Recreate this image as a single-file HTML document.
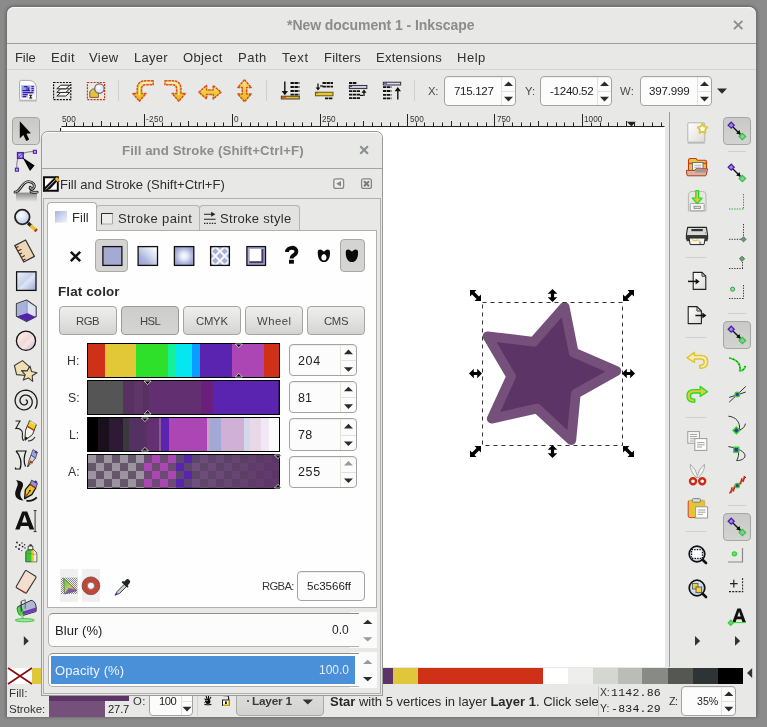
<!DOCTYPE html>
<html><head><meta charset="utf-8">
<style>
*{box-sizing:border-box;margin:0;padding:0}
html,body{width:767px;height:727px;overflow:hidden}
body{background:#8b8b8b;font-family:"Liberation Sans",sans-serif;font-size:13px;color:#2e2e2e;position:relative}
.a{position:absolute}
.t{position:absolute;white-space:nowrap;line-height:1;will-change:transform}
.t b{font-weight:bold}
.m{font-family:"Liberation Mono",monospace}
.hl{position:absolute;height:1px}
.vl{position:absolute;width:1px}
.fld{position:absolute;background:#fcfcfc;border:1px solid #a3a3a0;border-radius:4px;box-shadow:inset 0 1px 1px rgba(0,0,0,.06)}
.btn{position:absolute;border:1px solid #a4a4a1;border-radius:4px;background:linear-gradient(#eeeeed,#e2e2e0 50%,#d3d3d1)}
.btn.on{background:linear-gradient(#cdcdcb,#d4d4d2);border-color:#9a9a97}
svg{position:absolute;overflow:visible;left:0;top:0}

</style></head><body>
<!-- win -->
<div class="a" style="left:6px;top:6px;width:751px;height:711px;background:#747474;border-radius:8px 8px 0 0;box-shadow:0 0 3px 0 rgba(70,70,70,.7)"></div>
<div class="a" style="left:7px;top:7px;width:749.4px;height:709.6px;background:#e8e8e7;border-radius:7px 7px 0 0;box-shadow:inset 0 1px 0 #fbfbfb"></div>
<div class="t" id="t0" style="top:18px;font-size:14px;color:#8c8c8c;left:286.96px;font-weight:bold;letter-spacing:-0.062px;">*New document 1 - Inkscape</div>
<svg width="767" height="727"><path d="M734 20.8l8.4 8.4M742.4 20.8l-8.4 8.4" stroke="#8a8e8e" stroke-width="1.9" fill="none"/></svg>
<div class="hl" style="left:7px;top:43px;width:749.4px;background:#9d9d9b"></div>
<div class="hl" style="left:7px;top:69px;width:749.4px;background:#d4d4d2"></div>

<!-- menu -->
<div class="t" id="t1" style="top:51px;font-size:13px;color:#303030;left:14.72px;letter-spacing:-0.084px;">File</div><div class="t" id="t2" style="top:51px;font-size:13px;color:#303030;left:50.72px;letter-spacing:0.387px;">Edit</div><div class="t" id="t3" style="top:51px;font-size:13px;color:#303030;left:89.42px;letter-spacing:0.402px;">View</div><div class="t" id="t4" style="top:51px;font-size:13px;color:#303030;left:133.62px;letter-spacing:0.273px;">Layer</div><div class="t" id="t5" style="top:51px;font-size:13px;color:#303030;left:182.72px;letter-spacing:0.379px;">Object</div><div class="t" id="t6" style="top:51px;font-size:13px;color:#303030;left:237.72px;letter-spacing:0.517px;">Path</div><div class="t" id="t7" style="top:51px;font-size:13px;color:#303030;left:282.02px;letter-spacing:0.776px;">Text</div><div class="t" id="t8" style="top:51px;font-size:13px;color:#303030;left:323.62px;letter-spacing:0.211px;">Filters</div><div class="t" id="t9" style="top:51px;font-size:13px;color:#303030;left:375.62px;letter-spacing:0.228px;">Extensions</div><div class="t" id="t10" style="top:51px;font-size:13px;color:#303030;left:456.92px;letter-spacing:0.517px;">Help</div>
<!-- toolbar -->
<div class="vl" style="left:118px;top:80px;height:21px;background:#cfcfcd"></div><div class="vl" style="left:266px;top:80px;height:21px;background:#cfcfcd"></div><div class="vl" style="left:414px;top:80px;height:21px;background:#cfcfcd"></div><div class="t" id="t11" style="top:86px;font-size:11.3px;color:#4a4a4a;left:428.322px;letter-spacing:-0.221px;">X:</div><div class="fld" style="left:444px;top:76px;width:72px;height:30px"></div><div class="vl" style="left:501px;top:77px;height:28px;background:#e4e2d8"></div><div class="hl" style="left:502px;top:91px;width:13px;background:#e4e2d8"></div><div class="t" id="t12" style="top:85px;font-size:11.6px;color:#222;left:453.804px;letter-spacing:-0.328px;">715.127</div><svg width="767" height="727"><path d="M504 86l4.5 -4.6l4.5 4.6z" fill="#2b2b2b"/><path d="M504 96.8l4.5 4.6l4.5 -4.6z" fill="#2b2b2b"/></svg><div class="t" id="t13" style="top:86px;font-size:11.3px;color:#4a4a4a;left:524.722px;letter-spacing:0.196px;">Y:</div><div class="fld" style="left:540px;top:76px;width:72px;height:30px"></div><div class="vl" style="left:597px;top:77px;height:28px;background:#e4e2d8"></div><div class="hl" style="left:598px;top:91px;width:13px;background:#e4e2d8"></div><div class="t" id="t14" style="top:85px;font-size:11.6px;color:#222;left:549.804px;letter-spacing:-0.292px;">-1240.52</div><svg width="767" height="727"><path d="M600 86l4.5 -4.6l4.5 4.6z" fill="#2b2b2b"/><path d="M600 96.8l4.5 4.6l4.5 -4.6z" fill="#2b2b2b"/></svg><div class="t" id="t15" style="top:86px;font-size:11.3px;color:#4a4a4a;left:620.122px;letter-spacing:0.298px;">W:</div><div class="fld" style="left:640px;top:76px;width:72px;height:30px"></div><div class="vl" style="left:697px;top:77px;height:28px;background:#e4e2d8"></div><div class="hl" style="left:698px;top:91px;width:13px;background:#e4e2d8"></div><div class="t" id="t16" style="top:85px;font-size:11.6px;color:#222;left:649.104px;letter-spacing:-0.205px;">397.999</div><svg width="767" height="727"><path d="M700 86l4.5 -4.6l4.5 4.6z" fill="#2b2b2b"/><path d="M700 96.8l4.5 4.6l4.5 -4.6z" fill="#2b2b2b"/></svg><svg width="767" height="727"><path d="M717 88.5h10l-5 5.2z" fill="#2b2b2b"/></svg><svg id="tbicons" width="767" height="727"><defs><linearGradient id="gArr" x1="0" y1="0" x2="0" y2="1"><stop offset="0" stop-color="#f4e89a"/><stop offset=".45" stop-color="#ecd040"/><stop offset="1" stop-color="#e2ba18"/></linearGradient></defs><path d="M19.600 82q0-1.600 1.600-1.600h8.600q6.400 1 6.600 7.600v10.800q0 1.400-1.400 1.400h-14q-1.400 0-1.400-1.400z" fill="#fefefe" stroke="#aaaaa8" stroke-width="1"/><path d="M19 101h18" stroke="#b4b4b2" stroke-width="1"/><rect x="21" y="85" width="13.600" height="12.800" fill="#b8cde8"/><rect x="22" y="86" width="8" height="5.200" fill="#7aa8e0"/><path d="M22.400 90.600h7.600M24 86.600h3.400M27 87v3M28.600 87.400v2.600M31.400 86.600h2.400M31.400 88.600h2.400M31.400 90.600h2.400M22.600 92.600h10.600M22.600 94.600h5M22.600 96.600h3.600" stroke="#4a12b0" stroke-width="1.100"/><rect x="28" y="94.200" width="6.600" height="4.600" fill="#fefefe"/><path d="M29.200 95.200h3M29.200 98h3M30.700 95.200v2.800" stroke="#111" stroke-width="1.100"/><rect x="53.600" y="82.500" width="17.200" height="17.200" fill="none" stroke="#111" stroke-width="1.200" stroke-dasharray="2 1.100"/><path d="M56.800 96L60.800 92.4H69.800L65.800 96Z" fill="#fdfdfd" stroke="#222" stroke-width="1" stroke-linejoin="round"/><path d="M56.800 92.4L60.800 88.8H69.800L65.800 92.4Z" fill="#fdfdfd" stroke="#222" stroke-width="1" stroke-linejoin="round"/><path d="M56.800 88.8L60.800 85.2H69.800L65.800 88.8Z" fill="#fdfdfd" stroke="#222" stroke-width="1" stroke-linejoin="round"/><rect x="87.400" y="82.500" width="17.200" height="17.200" fill="none" stroke="#d42a12" stroke-width="1.200" stroke-dasharray="2 1.100"/><path d="M89.800 97.400v-6l2.800-2.400h5.800v8.400z" fill="#e2c43a" stroke="#6a5a2a" stroke-width=".9"/><circle cx="99.400" cy="88.600" r="4.700" fill="#e4eaf8" stroke="#6a6a72" stroke-width="1.200"/><circle cx="98.400" cy="87.400" r="2" fill="#fff"/><g><path d="M153.200 80.800H146Q137.200 80.800 137.200 89V93.400H132.800L139.400 101.200L146 93.400H141.600V89Q141.600 84.800 146 84.800H153.200Z" fill="url(#gArr)" stroke="#d8501e" stroke-width="1.500" stroke-linejoin="round" stroke-dasharray="2.600 .7"/><path d="M152 82.800H146Q139.400 82.800 139.400 89V95" stroke="#fbf4d0" stroke-width="1" fill="none"/></g><g transform="translate(318.2 0) scale(-1 1)"><path d="M153.200 80.800H146Q137.200 80.800 137.200 89V93.400H132.800L139.400 101.200L146 93.400H141.600V89Q141.600 84.800 146 84.800H153.200Z" fill="url(#gArr)" stroke="#d8501e" stroke-width="1.500" stroke-linejoin="round" stroke-dasharray="2.600 .7"/><path d="M152 82.800H146Q139.400 82.800 139.400 89V95" stroke="#fbf4d0" stroke-width="1" fill="none"/></g><path d="M198.800 92.200L206.600 85.400V90H213.200V85.400L221 92.200L213.200 99V94.400H206.600V99Z" fill="url(#gArr)" stroke="#d8501e" stroke-width="1.500" stroke-linejoin="round" stroke-dasharray="2.600 .7"/><path d="M244.500 79.800L251.200 87.600H246.700V94H251.200L244.500 101.800L237.800 94H242.300V87.600H237.800Z" fill="url(#gArr)" stroke="#d8501e" stroke-width="1.500" stroke-linejoin="round" stroke-dasharray="2.600 .7"/><path d="M290.5 83H299.4" stroke="#111" stroke-width="1.8" stroke-dasharray="3.400 .6"/><path d="M290.5 87H299.4" stroke="#111" stroke-width="1.8" stroke-dasharray="3.400 .6"/><path d="M290.5 91H299.4" stroke="#111" stroke-width="1.8" stroke-dasharray="3.400 .6"/><path d="M290.5 94.6H299.4" stroke="#111" stroke-width="1.8" stroke-dasharray="3.400 .6"/><path d="M284.800 81.600v11" stroke="#111" stroke-width="1.400"/><path d="M281.600 91l3.200 4.200l3.200-4.200z" fill="#111"/><rect x="281.300" y="96.200" width="18" height="2.800" fill="#e8b820" stroke="#333" stroke-width=".9"/><path d="M282 97.200h4" stroke="#d42a12" stroke-width="1"/><path d="M322.5 83H333" stroke="#111" stroke-width="1.8" stroke-dasharray="3.400 .6"/><path d="M322.5 86.6H333" stroke="#111" stroke-width="1.8" stroke-dasharray="3.400 .6"/><path d="M325 98.4H333" stroke="#111" stroke-width="1.8" stroke-dasharray="3.400 .6"/><path d="M318 83.400v5" stroke="#111" stroke-width="1.300"/><path d="M315.600 87.400l2.400 3.200l2.400-3.200z" fill="#111"/><path d="M320 86h3" stroke="#111" stroke-width="1.200"/><rect x="315.400" y="92.200" width="17.600" height="3.600" fill="#e8c830" stroke="#5a4a10" stroke-width=".9"/><path d="M316 92.800h2" stroke="#d42a12" stroke-width="1"/><path d="M349 83H356.4" stroke="#111" stroke-width="1.8" stroke-dasharray="3.400 .6"/><path d="M349 91.2H360" stroke="#111" stroke-width="1.8" stroke-dasharray="3.400 .6"/><path d="M349 94.6H360" stroke="#111" stroke-width="1.8" stroke-dasharray="3.400 .6"/><path d="M349 98.2H360" stroke="#111" stroke-width="1.8" stroke-dasharray="3.400 .6"/><rect x="349.300" y="85.400" width="17.600" height="3.200" fill="#c8cce8" stroke="#222" stroke-width=".9"/><path d="M350 86.400h2" stroke="#5a24b0" stroke-width="1"/><path d="M364 92v4" stroke="#111" stroke-width="1.300"/><path d="M361.400 92.800l2.600-3.400l2.600 3.400z" fill="#111"/><path d="M360 95.400h3" stroke="#111" stroke-width="1.200"/><path d="M383 87.2H391.4" stroke="#111" stroke-width="1.8" stroke-dasharray="3.400 .6"/><path d="M383 91H391.4" stroke="#111" stroke-width="1.8" stroke-dasharray="3.400 .6"/><path d="M383 94.8H391.4" stroke="#111" stroke-width="1.8" stroke-dasharray="3.400 .6"/><path d="M383 98.4H391.4" stroke="#111" stroke-width="1.8" stroke-dasharray="3.400 .6"/><rect x="383.300" y="82.200" width="17.400" height="2.800" fill="#d4d8f0" stroke="#222" stroke-width=".9"/><path d="M384 83.200h3" stroke="#5a24b0" stroke-width="1"/><path d="M397.800 90v9.400" stroke="#111" stroke-width="1.400"/><path d="M394.600 91.200l3.200-4.200l3.200 4.200z" fill="#111"/></svg>
<!-- ruler -->
<svg width="767" height="727"><path d="M61.500 126.500H664.500M60.500 128V132" stroke="#222" stroke-width="1" fill="none"/><path d="M66.5 122.5V127M74.5 122.5V127M83.5 122.5V127M92.5 122.5V127M101.5 121V127M110.5 122.5V127M118.5 122.5V127M127.5 122.5V127M136.5 122.5V127M144.5 114V127M153.5 122.5V127M162.5 122.5V127M171.5 122.5V127M180.5 122.5V127M188.5 121V127M197.5 122.5V127M206.5 122.5V127M214.5 122.5V127M223.5 122.5V127M232.5 114V127M241.5 122.5V127M250.5 122.5V127M258.5 122.5V127M267.5 122.5V127M276.5 121V127M284.5 122.5V127M293.5 122.5V127M302.5 122.5V127M311.5 122.5V127M320.5 114V127M328.5 122.5V127M337.5 122.5V127M346.5 122.5V127M354.5 122.5V127M363.5 121V127M372.5 122.5V127M381.5 122.5V127M390.5 122.5V127M398.5 122.5V127M407.5 114V127M416.5 122.5V127M424.5 122.5V127M433.5 122.5V127M442.5 122.5V127M451.5 121V127M460.5 122.5V127M468.5 122.5V127M477.5 122.5V127M486.5 122.5V127M494.5 114V127M503.5 122.5V127M512.5 122.5V127M521.5 122.5V127M530.5 122.5V127M538.5 121V127M547.5 122.5V127M556.5 122.5V127M564.5 122.5V127M573.5 122.5V127M582.5 114V127M591.5 122.5V127M600.5 122.5V127M608.5 122.5V127M617.5 122.5V127M626.5 121V127M634.5 122.5V127M643.5 122.5V127M652.5 122.5V127M661.5 122.5V127" stroke="#222" stroke-width="1" fill="none"/><path d="M627 121.800h8.800l-4.400 4.600z" fill="#222"/></svg><div class="t" id="t17" style="top:116px;font-size:8.2px;color:#333;left:61.908px;letter-spacing:0.045px;">500</div><div class="t" id="t18" style="top:116px;font-size:8.2px;color:#333;left:145.608px;letter-spacing:0.341px;">-250</div><div class="t" id="t19" style="top:116px;font-size:8.2px;color:#333;left:234.008px;">0</div><div class="t" id="t20" style="top:116px;font-size:8.2px;color:#333;left:321.708px;letter-spacing:0.005px;">250</div><div class="t" id="t21" style="top:116px;font-size:8.2px;color:#333;left:409.508px;letter-spacing:0.045px;">500</div><div class="t" id="t22" style="top:116px;font-size:8.2px;color:#333;left:497.008px;letter-spacing:0.005px;">750</div><div class="t" id="t23" style="top:116px;font-size:8.2px;color:#333;left:584.108px;letter-spacing:0.047px;">1000</div>
<!-- canvas -->
<div class="a" style="left:61.500px;top:127px;width:603.500px;height:540.300px;background:#fff"></div><div class="vl" style="left:669px;top:112px;height:554.500px;background:#9c9c9a"></div><svg width="767" height="727"><polygon points="616.4,371.0 575.8,393.8 571.3,440.2 537.1,408.6 491.7,418.7 511.1,376.4 487.5,336.3 533.7,341.7 564.6,306.8 573.7,352.5" fill="#5c3566" stroke="#75507b" stroke-width="9.7" stroke-linejoin="round"/><rect x="482.5" y="302.5" width="140" height="143" fill="none" stroke="#333" stroke-width="1" stroke-dasharray="4 4"/><g transform="translate(475.5 295.5) scale(1 1)"><path d="M-5.5 -5.5L1 -5.5L-1.05 -3.45L3.45 1.05L5.5 -1L5.5 5.5L-1 5.5L1.05 3.45L-3.45 -1.05L-5.5 1Z" fill="#000"/></g><g transform="translate(552.5 295.5) rotate(90)"><path d="M-6.5 0l4.8 -4.8v3.2h3.4v-3.2l4.8 4.8l-4.8 4.8v-3.2h-3.4v3.2z" fill="#000"/></g><g transform="translate(628.5 295.5) scale(-1 1)"><path d="M-5.5 -5.5L1 -5.5L-1.05 -3.45L3.45 1.05L5.5 -1L5.5 5.5L-1 5.5L1.05 3.45L-3.45 -1.05L-5.5 1Z" fill="#000"/></g><g transform="translate(475.5 373.5) rotate(0)"><path d="M-6.5 0l4.8 -4.8v3.2h3.4v-3.2l4.8 4.8l-4.8 4.8v-3.2h-3.4v3.2z" fill="#000"/></g><g transform="translate(628.5 373.5) rotate(0)"><path d="M-6.5 0l4.8 -4.8v3.2h3.4v-3.2l4.8 4.8l-4.8 4.8v-3.2h-3.4v3.2z" fill="#000"/></g><g transform="translate(475.5 451.5) scale(-1 1)"><path d="M-5.5 -5.5L1 -5.5L-1.05 -3.45L3.45 1.05L5.5 -1L5.5 5.5L-1 5.5L1.05 3.45L-3.45 -1.05L-5.5 1Z" fill="#000"/></g><g transform="translate(552.5 451.5) rotate(90)"><path d="M-6.5 0l4.8 -4.8v3.2h3.4v-3.2l4.8 4.8l-4.8 4.8v-3.2h-3.4v3.2z" fill="#000"/></g><g transform="translate(628.5 451.5) scale(1 1)"><path d="M-5.5 -5.5L1 -5.5L-1.05 -3.45L3.45 1.05L5.5 -1L5.5 5.5L-1 5.5L1.05 3.45L-3.45 -1.05L-5.5 1Z" fill="#000"/></g></svg>
<!-- lefttools -->
<div class="btn on" style="left:12.200px;top:117px;width:27.600px;height:27.600px;background:linear-gradient(#c9c9c7,#d5d5d3);border-color:#a6a6a3"></div><svg width="767" height="727"><defs><linearGradient id="gRect" x1="0" y1="0" x2="1" y2="1"><stop offset="0" stop-color="#eef1fa"/><stop offset=".45" stop-color="#c9d3ea"/><stop offset=".55" stop-color="#dfe5f3"/><stop offset="1" stop-color="#9aa6d6"/></linearGradient><linearGradient id="gEll" x1="0" y1="0" x2="1" y2="1"><stop offset="0" stop-color="#fdf3f0"/><stop offset=".5" stop-color="#f0d8d8"/><stop offset=".6" stop-color="#f6e6e6"/><stop offset="1" stop-color="#c8a8d4"/></linearGradient><linearGradient id="gWave" x1="0" y1="0" x2="0" y2="1"><stop offset="0" stop-color="#8a8a8a"/><stop offset="1" stop-color="#e4e4e4"/></linearGradient><radialGradient id="gLens" cx=".4" cy=".35" r=".7"><stop offset="0" stop-color="#ffffff"/><stop offset="1" stop-color="#b8c8e8"/></radialGradient></defs><path d="M19.800 121.200V138.200L23.400 134.900L26.300 140.900L29.200 139.500L26.400 133.700L30.900 133.300Z" fill="#000"/><path d="M16.800 168C16.600 164 17 161.500 17.800 159M23.800 153.200C27 152 30 151.600 33.400 151.600" stroke="#777" stroke-width="1" fill="none"/><rect x="17.600" y="152.700" width="5.600" height="5.600" fill="#a8a4e4" stroke="#5020b0" stroke-width="1.500"/><path d="M18.500 157.400l3.800-3.800" stroke="#5020b0" stroke-width=".8"/><rect x="33.400" y="150.300" width="3" height="3" fill="#c0b0f0" stroke="#5020b0" stroke-width="1.100"/><rect x="15.400" y="168.200" width="3" height="3" fill="#c0b0f0" stroke="#5020b0" stroke-width="1.100"/><path d="M22.600 157.400L34.600 165.400L30 171Z" fill="#000"/><path d="M16 192.600h21v8.800h-21z" fill="url(#gWave)"/><path d="M15 192.200C20.500 192.200 21.500 181.800 28.400 181.600C33 181.500 35.600 185.200 33.600 188.200C32.200 190 29.800 189.200 30.200 187.200M31 191.800C33 192.400 35 192.400 37.200 192.200" stroke="#222" stroke-width="2.800" fill="none" stroke-linecap="round"/><path d="M15 192.200C20.500 192.200 21.500 181.800 28.400 181.600C33 181.500 35.600 185.200 33.600 188.200C32.200 190 29.800 189.200 30.200 187.200M31 191.800C33 192.400 35 192.400 37.200 192.200" stroke="#f4f4f4" stroke-width=".9" fill="none" stroke-linecap="round"/><circle cx="22.3" cy="217" r="7.3" fill="url(#gLens)" stroke="#222" stroke-width="1.8"/><path d="M28 223l3.5 3.2" stroke="#222" stroke-width="3.2"/><path d="M30.6 225.6l5.4 4.8" stroke="#e6c42a" stroke-width="3.4"/><path d="M35.2 229.6l1.4 1.3" stroke="#d42a12" stroke-width="3.4"/><path d="M14.8 245.6L25.6 240L34.4 256.4L23.8 262Z" fill="#ecd8b6" stroke="#333" stroke-width="1.2" stroke-linejoin="round"/><path d="M16 247.8l2.6 -1.3M17.8 251l3.6 -1.8M19.5 254.2l2.6 -1.3M21.2 257.4l3.6 -1.8M22.9 260.2l2.6 -1.3" stroke="#7a1a10" stroke-width="1.1"/><rect x="16.6" y="271.8" width="19.4" height="18.6" fill="url(#gRect)" stroke="#111" stroke-width="1.3"/><path d="M26.600 300L36.200 306.600V316.600L26.600 321.600L16.400 316.200V303.800Z" fill="#dfe2f2" stroke="#3a3a3a" stroke-width="1.100" stroke-linejoin="round"/><path d="M16.900 304.200L27.200 300.800V313L16.900 316Z" fill="#a8b0dc"/><path d="M17 316.200L27.200 313L35.600 317L26.600 321.200Z" fill="#5322a8"/><path d="M27.200 300.600V313" stroke="#8a8aa8" stroke-width=".7" fill="none"/><circle cx="26" cy="340.8" r="9.6" fill="url(#gEll)" stroke="#111" stroke-width="1.3"/><polygon points="22.5,360.6 29.6,366.8 25.9,375.5 16.6,374.6 14.4,365.5" fill="#f0e0b4" stroke="#3a3a3a" stroke-width="1.100" stroke-linejoin="round"/><polygon points="30.0,366.1 31.5,371.5 37.0,372.8 32.2,375.8 32.7,381.4 28.4,377.9 23.2,380.1 25.3,374.8 21.5,370.6 27.2,370.9" fill="#f2e2b0" stroke="#3a3a3a" stroke-width="1.100" stroke-linejoin="round"/><path d="M25.7 399.8L26.1 399.9L26.4 400.1L26.8 400.4L27.1 400.7L27.3 401.2L27.4 401.7L27.4 402.3L27.2 402.9L26.9 403.5L26.5 404.0L25.9 404.4L25.3 404.7L24.5 404.9L23.7 404.9L22.9 404.7L22.1 404.3L21.4 403.8L20.8 403.0L20.3 402.2L20.0 401.2L20.0 400.2L20.2 399.1L20.6 398.1L21.2 397.1L22.1 396.3L23.1 395.6L24.3 395.2L25.5 395.1L26.9 395.2L28.1 395.6L29.4 396.2L30.4 397.2L31.3 398.4L31.9 399.7L32.2 401.2L32.2 402.8L31.9 404.3L31.2 405.8L30.2 407.1L29.0 408.2L27.5 409.1L25.8 409.6L24.0 409.8L22.2 409.6L20.4 409.0L18.8 408.0L17.4 406.7L16.3 405.0L15.5 403.2L15.1 401.2L15.2 399.1L15.7 397.1L16.6 395.2L17.9 393.5L19.6 392.0L21.6 391.0L23.8 390.3L26.1 390.2L28.4 390.5L30.6 391.3L32.6 392.6L34.4 394.3L35.8 396.4L36.7 398.7L37.1 401.2L37.0 403.8L36.4 406.3L35.2 408.7" stroke="#1a1a1a" stroke-width="1.300" fill="none" stroke-linejoin="round"/><path d="M15.5 421H20L15.8 428.5C19 428 23 430 22.5 434C22 437.5 22 440 24 440.5M28 441C31 441 33.5 439.5 35 437" stroke="#222" stroke-width="1.1" fill="none"/><path d="M25 440.200L25.600 430.400L29.600 420.600L36.400 424.800L32.400 434.600Z" fill="#ecd024" stroke="#333" stroke-width=".9" stroke-linejoin="round"/><path d="M25 440.200L25.600 430.400L27.400 426L34.200 430.200L32.400 434.600Z" fill="#f8f4ec" stroke="#333" stroke-width=".8" stroke-linejoin="round"/><path d="M27.400 426.400L34.200 430.600" stroke="#d42a12" stroke-width="1.200"/><path d="M25 440.200l.3-3.600l2.800 1.400z" fill="#111"/><path d="M30.400 421.600l5 3.100" stroke="#f8f0b0" stroke-width="1.200"/><path d="M16 451H26C24 456 23.5 462 25.5 466.5M16 451C20 455 22.5 463 20 469H15.5V467.5" stroke="#111" stroke-width="1.2" fill="none"/><path d="M27.5 467L29 460.5L31 455L35.6 458L32 462.5Z" fill="#ccd4ea" stroke="#333" stroke-width=".8"/><path d="M31 455L33 449.5L37.4 452.5L35.6 458Z" fill="#9aaad6" stroke="#446" stroke-width=".8"/><path d="M29.6 461l3 2" stroke="#d42a12" stroke-width="1.6"/><path d="M29.4 463l2 1.4" stroke="#f0c020" stroke-width="1.4"/><path d="M27.5 467l3-5" stroke="#222" stroke-width=".8"/><path d="M35 451.5l2 1.3" stroke="#5320a8" stroke-width="2.2"/><path d="M15.800 480.200C22.500 480.400 24.500 483.600 22.200 488.200C20 492.600 19 496.400 23.600 500.400C17.400 500.400 13.800 496.400 15.600 490.800C17.200 486 19.400 483.200 15.800 480.200Z" fill="#111"/><path d="M26.400 500.600C30.400 501.200 34.400 500 36.800 497.400" stroke="#111" stroke-width="1.800" fill="none"/><path d="M24.600 498.600L25.400 489.600L30 484.200L35.800 488L31.800 494.600Z" fill="#e8c434" stroke="#111" stroke-width="1.300" stroke-linejoin="round"/><path d="M30 484.200L31.600 480.200L37.400 483.400L35.800 488Z" fill="#8a9ad0" stroke="#333" stroke-width=".9"/><path d="M25.600 497.200l4.200-6.400" stroke="#111" stroke-width=".9"/><circle cx="29.900" cy="490.600" r=".9" fill="#111"/><path d="M30.600 484.800l4.800 3" stroke="#d42a12" stroke-width="1.300"/><path d="M25.400 494.600l1.400 1" stroke="#d42a12" stroke-width="1.200"/><path d="M34.600 481.200l2.400 1.500" stroke="#5320a8" stroke-width="2"/><path d="M15.2 529.6L22.2 511.4H27.2L34.2 529.6H29.6L28.4 526H20.8L19.6 529.6ZM22 522.6H27.2L24.6 514.8Z" fill="#111"/><path d="M33.6 510.6h3M35.1 510.6v21M33.6 531.6h3" stroke="#222" stroke-width=".9" fill="none"/><path d="M25.800 551.600L28 549.600H33.800L36.800 553V561.800H25.800Z" fill="#34c832" stroke="#444" stroke-width=".9" stroke-linejoin="round"/><path d="M31.400 550h2.600V561.600h-2.600z" fill="#ecd024"/><path d="M34 550.200l2.400 2.900V561.400H34z" fill="#eeeeec"/><path d="M28.200 546h4.600v3.800H28.200z" fill="#f4f4f4" stroke="#333" stroke-width=".9"/><path d="M29.400 544.300h2.400v1.800H29.400z" fill="#333"/><path d="M27 553.400l8.800 1" stroke="#d42a12" stroke-width=".7" opacity=".6"/><g fill="#222"><circle cx="17" cy="542.5" r=".9"/><circle cx="19.6" cy="545" r=".9"/><circle cx="16" cy="546.8" r=".9"/><circle cx="22" cy="543" r=".7"/><circle cx="22.6" cy="546.6" r=".9"/><circle cx="19" cy="549" r="1"/><circle cx="24.6" cy="544.8" r=".7"/><circle cx="25" cy="548" r=".7"/><circle cx="21.8" cy="550.6" r=".6"/></g><path d="M26.4 570.6L35.6 576.2Q36.4 577 35.8 578L26.6 592.6Q26 593.4 25 592.8L16.6 587.8Q15.8 587.2 16.4 586.2L25 571.2Q25.6 570.2 26.4 570.6Z" fill="#f4ded0" stroke="#333" stroke-width="1.1"/><path d="M21.6 590.6l3 1.8" stroke="#d42a12" stroke-width="1.2"/><path d="M17.6 606.8L31 600.4C34.5 600.2 37 605 36 611.5L22.6 615.6C18.6 614.6 16.6 610 17.6 606.8Z" fill="#aeb8d4" stroke="#333" stroke-width="1"/><ellipse cx="20.2" cy="611" rx="2.6" ry="4.8" transform="rotate(-18 20.2 611)" fill="#48d840" stroke="#2a8a26" stroke-width=".8"/><path d="M22.6 614.8L36 611C36.3 609.5 36.3 608.5 36 607.5L23 611.5Z" fill="#6a3ab8"/><path d="M21.2 601.2V611.5" stroke="#333" stroke-width="1.1"/><path d="M21.2 601.2l4-1.4v9" stroke="#555" stroke-width=".9" fill="none"/><path d="M21.600 614.500C22.400 617 22.600 618 23.600 619.500" stroke="#8ad886" stroke-width="2.400" fill="none"/><ellipse cx="24.800" cy="620.200" rx="9.600" ry="1.600" fill="#a8dca4" stroke="#30c82c" stroke-width=".9"/><path d="M23.8 636L28.8 640.9L23.8 645.8Z" fill="#333"/></svg>
<!-- right -->
<div class="btn on" style="left:723px;top:117px;width:28px;height:28px;background:linear-gradient(#c9c9c7,#d3d3d1);border-color:#a6a6a3"></div><div class="btn on" style="left:723px;top:320.8px;width:28px;height:28px;background:linear-gradient(#c9c9c7,#d3d3d1);border-color:#a6a6a3"></div><div class="btn on" style="left:723px;top:512.8px;width:28px;height:28px;background:linear-gradient(#c9c9c7,#d3d3d1);border-color:#a6a6a3"></div><div class="hl" style="left:686px;top:257px;width:20px;background:#cfcfcd"></div><div class="hl" style="left:686px;top:337px;width:20px;background:#cfcfcd"></div><div class="hl" style="left:686px;top:417px;width:20px;background:#cfcfcd"></div><div class="hl" style="left:686px;top:531px;width:20px;background:#cfcfcd"></div><div class="hl" style="left:728px;top:151px;width:18px;background:#cfcfcd"></div><div class="hl" style="left:728px;top:313px;width:18px;background:#cfcfcd"></div><div class="hl" style="left:728px;top:505px;width:18px;background:#cfcfcd"></div><svg width="767" height="727"><defs><linearGradient id="gPage" x1="0" y1="0" x2="1" y2="1"><stop offset="0" stop-color="#ffffff"/><stop offset="1" stop-color="#dcdcda"/></linearGradient><radialGradient id="gLens2" cx=".4" cy=".35" r=".8"><stop offset="0" stop-color="#f4f8ff"/><stop offset="1" stop-color="#a8c0e4"/></radialGradient></defs><path d="M733 127l7.2 7.2" stroke="#111" stroke-width="1.3"/><path d="M740.8 134.8l-1.3 -4.7l-3.4 3.4z" fill="#111"/><path d="M728.2 125.2l3 -3l3 3l-3 3z" fill="#9f8fe0" stroke="#4b1fb0" stroke-width="1.3"/><path d="M739.2 136.5l3.2 -3.2l3.2 3.2l-3.2 3.2z" fill="#b4add8" stroke="#22d322" stroke-width="1.3"/><path d="M733 169l7.2 7.2" stroke="#111" stroke-width="1.3"/><path d="M740.8 176.8l-1.3 -4.7l-3.4 3.4z" fill="#111"/><path d="M728.2 167.2l3 -3l3 3l-3 3z" fill="#9f8fe0" stroke="#4b1fb0" stroke-width="1.3"/><path d="M739.2 178.5l3.2 -3.2l3.2 3.2l-3.2 3.2z" fill="#b4add8" stroke="#22d322" stroke-width="1.3"/><path d="M733 331l7.2 7.2" stroke="#111" stroke-width="1.3"/><path d="M740.8 338.8l-1.3 -4.7l-3.4 3.4z" fill="#111"/><path d="M728.2 329.2l3 -3l3 3l-3 3z" fill="#9f8fe0" stroke="#4b1fb0" stroke-width="1.3"/><path d="M739.2 340.5l3.2 -3.2l3.2 3.2l-3.2 3.2z" fill="#b4add8" stroke="#22d322" stroke-width="1.3"/><path d="M733 523l7.2 7.2" stroke="#111" stroke-width="1.3"/><path d="M740.8 530.8l-1.3 -4.7l-3.4 3.4z" fill="#111"/><path d="M728.2 521.2l3 -3l3 3l-3 3z" fill="#9f8fe0" stroke="#4b1fb0" stroke-width="1.3"/><path d="M739.2 532.5l3.2 -3.2l3.2 3.2l-3.2 3.2z" fill="#b4add8" stroke="#22d322" stroke-width="1.3"/><path d="M743.5 194L743.5 209" stroke="#2a9a2a" stroke-width="1" stroke-dasharray="1.3 1.3" fill="none"/><path d="M729 209L744 209" stroke="#2a9a2a" stroke-width="1" stroke-dasharray="1.3 1.3" fill="none"/><path d="M743.5 224L743.5 239" stroke="#333" stroke-width="1" stroke-dasharray="1.3 1.3" fill="none"/><path d="M729 239.3L744 239.3" stroke="#333" stroke-width="1" stroke-dasharray="1.3 1.3" fill="none"/><path d="M740.9 239.300l2.600-2.600l2.600 2.600l-2.600 2.600z" fill="#889" stroke="#2a8a2a" stroke-width=".9"/><path d="M742.5 262L742.5 268.5" stroke="#333" stroke-width="1" stroke-dasharray="1.3 1.3" fill="none"/><path d="M729 268.5L743 268.5" stroke="#333" stroke-width="1" stroke-dasharray="1.3 1.3" fill="none"/><path d="M739.400 258.800l2.600-2.600l2.600 2.600l-2.600 2.600z" fill="#889" stroke="#2a8a2a" stroke-width=".9"/><path d="M743.5 285L743.5 298.5" stroke="#333" stroke-width="1" stroke-dasharray="1.3 1.3" fill="none"/><path d="M729 298.5L744 298.5" stroke="#333" stroke-width="1" stroke-dasharray="1.3 1.3" fill="none"/><circle cx="732.6" cy="289.2" r="2.1" fill="#b8c0c8" stroke="#2aaa2a" stroke-width="1"/><path d="M729.3 358C737 359.5 741.5 364.5 739.6 371M745.4 366C744.6 369 742.4 370.8 739.6 371" stroke="#22dd22" stroke-width="1.7" fill="none"/><path d="M729.3 358C737 359.5 741.5 364.5 739.6 371M745.4 366C744.6 369 742.4 370.8 739.6 371" stroke="#1a5a1a" stroke-width="1.2" stroke-dasharray="1 2.800" fill="none"/><path d="M729.2 402.2L745.8 386.4M729.2 397.4L745.8 392" stroke="#333" stroke-width="1" fill="none"/><circle cx="737.3" cy="394.4" r="2.3" fill="#5a22b4" stroke="#22dd22" stroke-width="1.3"/><path d="M728.4 416.2C736 417 740.5 422 739.4 430C743 429 745 426.6 745.4 423.6" stroke="#333" stroke-width="1" fill="none"/><path d="M733 430.4l3.4-3.4l3.4 3.4l-3.4 3.4z" fill="#5a22b4" stroke="#22dd22" stroke-width="1.4"/><path d="M728.4 446.6C738 448 745.5 452 745 456C744.6 459 741 460.6 736.6 460.6C738.6 457 739.6 453.5 737 450" stroke="#333" stroke-width="1" fill="none"/><rect x="733.8" y="447.2" width="5" height="5" fill="#5a22b4" stroke="#22dd22" stroke-width="1.3"/><path d="M729 493.4L746 477" stroke="#333" stroke-width="1" fill="none"/><path d="M730.600 493.200l1.600-6M733.200 491.600l1.600-6M740.400 484.200l1.600-6M743 482l1.600-6" stroke="#d42a12" stroke-width="1.600"/><circle cx="737.3" cy="485.5" r="2.2" fill="#5a22b4" stroke="#22dd22" stroke-width="1.3"/><path d="M742.5 548V562H728" stroke="#8a8a8a" stroke-width="1.2" fill="none"/><circle cx="734.4" cy="553.8" r="2" fill="#9c9" stroke="#22dd22" stroke-width="1.3"/><path d="M730 583.6h7.6M733.8 579.8v7.6" stroke="#222" stroke-width="1.2"/><path d="M742.6 578L742.6 592" stroke="#222" stroke-width="1" stroke-dasharray="2 1.2" fill="none"/><path d="M729 591.6L743.2 591.6" stroke="#222" stroke-width="1.4" stroke-dasharray="2 1.2" fill="none"/><path d="M732.4 622L737.4 608.4H740.8L745.8 622H742.4L741.5 619.2H736.6L735.7 622ZM737.4 616.6H740.7L739.1 611.4Z" fill="#111"/><path d="M733 622.6H746" stroke="#22dd22" stroke-width="1"/><path d="M728.2 622.8l2.6-2.6l2.6 2.6l-2.6 2.6z" fill="#aab" stroke="#22dd22" stroke-width="1.2"/><path d="M695 636L700.2 640.9L695 645.8Z" fill="#333"/><path d="M735 636L740.2 640.9L735 645.8Z" fill="#333"/><rect x="687.8" y="122.8" width="17" height="19.4" rx="1.2" fill="url(#gPage)" stroke="#b4b4b2" stroke-width="1"/><path d="M687.5 143h17.6" stroke="#aaa" stroke-width="1"/><polygon points="702.5,123.8 704.1,126.5 707.3,127.3 705.2,129.7 705.4,132.8 702.5,131.6 699.6,132.8 699.8,129.7 697.7,127.3 700.9,126.5" fill="#fff" stroke="#e2c432" stroke-width="1.8" stroke-linejoin="round"/><path d="M688.5 160.5q0-2 2-2h5.5l1.5 1.8h7.6q1.4 0 1.4 1.5V173h-18z" fill="#e8c43c" stroke="#c4381c" stroke-width="1.1"/><path d="M689 163.4h17" stroke="#d4502a" stroke-width="1.6"/><rect x="692.6" y="162.6" width="10.4" height="9" fill="#fdfdfd" stroke="#666" stroke-width=".9"/><path d="M694.4 165.2h7M694.4 167.2h7M694.4 169.2h7" stroke="#999" stroke-width=".8"/><path d="M686.4 170.4h8.6l1-1.6h11.6l-1.4 6.2q-.2.8-1.2.8h-17q-1 0-1.1-.9z" fill="#d8b09c" stroke="#b4381c" stroke-width="1"/><path d="M696 169.6h10.6l-.6 2.8h-10.8z" fill="#999"/><path d="M688.4 211V195q0-3.6 3.6-3.6h10.4q3.6 0 3.6 3.6V211z" fill="#e6e6e4" stroke="#b8b8b6" stroke-width="1"/><rect x="690.2" y="203.4" width="14" height="7.4" rx="1" fill="#f4f4f2" stroke="#9a9a98" stroke-width=".9"/><rect x="694" y="206.2" width="6.4" height="2.4" fill="#ddd" stroke="#777" stroke-width=".7"/><path d="M695.8 190.6h2.8v7.4h3.6l-5 5.6l-5-5.6h3.6z" fill="#e6c23e" stroke="#22dd22" stroke-width="1.2" stroke-linejoin="round"/><path d="M687.6 227.4h18.8l1.2 7.6v4h-21.2v-4z" fill="#d9d9d7" stroke="#222" stroke-width="1.1" stroke-linejoin="round"/><rect x="691.4" y="229" width="11.4" height="2.2" fill="#333"/><path d="M686.6 235h21v6.2h-21z" fill="#3a3a3a"/><path d="M689 238h16.2l-1.2 6.6h-13.8z" fill="#f4f4ec" stroke="#222" stroke-width="1"/><path d="M692 239.6l3 1.2l3-1l3 2.4" stroke="#e0c040" stroke-width="1" fill="none"/><path d="M699 243h2.4" stroke="#3a8ae0" stroke-width="1.2"/><circle cx="705.6" cy="233" r=".8" fill="#2d2"/><path d="M693.2 272.4h8.8l3.8 3.8v13.2h-12.6z" fill="url(#gPage)" stroke="#222" stroke-width="1.1" stroke-linejoin="round"/><path d="M702 272.4v3.8h3.8" fill="none" stroke="#222" stroke-width=".9"/><path d="M688 281.4h8.4" stroke="#111" stroke-width="1.5"/><path d="M695.6 278.4l4 3l-4 3z" fill="#111"/><path d="M688.2 306.6h8.8l4.4 4.4v12.6h-13.2z" fill="url(#gPage)" stroke="#222" stroke-width="1.1" stroke-linejoin="round"/><path d="M697 306.6v4.4h4.4" fill="none" stroke="#222" stroke-width=".9"/><path d="M695.4 315.5h8" stroke="#111" stroke-width="1.5"/><path d="M702.4 312.4l4 3.1l-4 3.1z" fill="#111"/><path d="M687 357.8l7.4-5.4v3.2h6.6q6.6 0 6.6 6.2q0 6-6 6.4h-1.8v-3h1.4q3-.2 3-3.2q0-3-3.2-3h-6.6v3.4z" fill="#f6eeb8" stroke="#e2c432" stroke-width="1.5" stroke-linejoin="round"/><path d="M707.6 391.8l-7.4-5.4v3.2h-6.6q-6.6 0-6.6 6.2q0 6 6 6.4h1.8v-3h-1.4q-3-.2-3-3.2q0-3 3.2-3h6.6v3.4z" fill="#e8c83c" stroke="#22dd22" stroke-width="1.3" stroke-linejoin="round"/><rect x="687.8" y="431.6" width="11.6" height="11.6" fill="#fdfdfd" stroke="#9a9a98" stroke-width="1"/><path d="M689.8 434.4h7.4M689.8 436.6h7.4M689.8 438.8h7.4M689.8 441h4" stroke="#8a8a88" stroke-width=".8"/><rect x="694.8" y="438.6" width="12" height="11.8" fill="#fdfdfd" stroke="#9a9a98" stroke-width="1"/><path d="M697 442.6h7.6M697 444.8h7.6M697 447h5" stroke="#8a8a88" stroke-width=".8"/><path d="M690.4 464.4q-1.2 5.4 6.2 13.6l1-1.4q-1-7-7.2-12.2z" fill="#f2f2f0" stroke="#9a9a98" stroke-width=".8"/><path d="M704.4 464.4q1.2 5.4-6.2 13.6l-1-1.4q1-7 7.2-12.200z" fill="#f2f2f0" stroke="#9a9a98" stroke-width=".8"/><circle cx="693" cy="481.2" r="3" fill="#fff" stroke="#cc2a12" stroke-width="2.4"/><circle cx="702.2" cy="481.2" r="3" fill="#fff" stroke="#cc2a12" stroke-width="2.4"/><rect x="688.2" y="500.4" width="16.4" height="17.2" rx="1.6" fill="#e2c436" stroke="#d8402a" stroke-width="1"/><path d="M688.2 500.4h16.4v17.2" stroke="#d8c060" fill="none"/><rect x="692.4" y="498.6" width="8" height="3.6" rx="1.2" fill="#ddd" stroke="#777" stroke-width=".9"/><rect x="695.6" y="506.8" width="12" height="11.2" fill="#fdfdfd" stroke="#9a9a98" stroke-width="1"/><path d="M697.8 510h7.6M697.8 512.2h7.6M697.8 514.4h5" stroke="#8a8a88" stroke-width=".8"/><circle cx="697" cy="554" r="7.8" fill="url(#gLens2)" stroke="#111" stroke-width="1.7"/><rect x="691.6" y="549.6" width="10.8" height="8.8" fill="#fff" stroke="#111" stroke-width="1.2" stroke-dasharray="1.4 1.2"/><path d="M702.6 559.8l3.4 3.2" stroke="#111" stroke-width="2.6" stroke-linecap="round"/><circle cx="697" cy="588" r="7.8" fill="url(#gLens2)" stroke="#111" stroke-width="1.7"/><rect x="692.4" y="583.4" width="5.6" height="5.6" fill="#f0d040" stroke="#555" stroke-width=".9"/><rect x="696" y="587" width="5.6" height="5.6" fill="#f0d040" stroke="#555" stroke-width=".9"/><path d="M702.6 593.8l3.4 3.2" stroke="#111" stroke-width="2.6" stroke-linecap="round"/></svg>
<!-- palette -->
<div class="a" style="left:8px;top:668px;width:24px;height:16px;background:#fff"></div><svg width="767" height="727"><path d="M8 668L32 684M32 668L8 684" stroke="#8b0a0a" stroke-width="1.6"/></svg><div class="a" style="left:32px;top:668px;width:350px;height:16px;background:#e0c63a"></div><div class="a" style="left:382px;top:668px;width:10.5px;height:16px;background:#5c3566"></div><div class="a" style="left:392.5px;top:668px;width:25.5px;height:16px;background:#e0c63a"></div><div class="a" style="left:418px;top:668px;width:125px;height:16px;background:#cf3018"></div><div class="a" style="left:543px;top:668px;width:24.7px;height:16px;background:#ffffff"></div><div class="a" style="left:567.7px;top:668px;width:24.9px;height:16px;background:#eeeeec"></div><div class="a" style="left:592.6px;top:668px;width:25px;height:16px;background:#d3d7cf"></div><div class="a" style="left:617.6px;top:668px;width:24.8px;height:16px;background:#babdb6"></div><div class="a" style="left:642.4px;top:668px;width:25.2px;height:16px;background:#888a85"></div><div class="a" style="left:667.6px;top:668px;width:25.1px;height:16px;background:#555753"></div><div class="a" style="left:692.7px;top:668px;width:25.1px;height:16px;background:#2e3436"></div><div class="a" style="left:717.8px;top:668px;width:25.2px;height:16px;background:#000000"></div><svg width="767" height="727"><path d="M752.2 668v10l-5.2-5z" fill="#2e3436"/></svg>
<!-- status -->
<div class="t" id="t24" style="top:687px;font-size:11.6px;color:#333;left:8.904px;letter-spacing:0.080px;">Fill:</div><div class="t" id="t25" style="top:703px;font-size:11.6px;color:#333;left:8.904px;letter-spacing:-0.083px;">Stroke:</div><div class="a" style="left:49px;top:686px;width:79.800px;height:15px;background:#5c3566"></div><div class="a" style="left:49px;top:701px;width:56.200px;height:15.600px;background:#75507b"></div><div class="t" id="t26" style="top:704px;font-size:11.2px;color:#222;left:107.728px;letter-spacing:-0.154px;">27.7</div><div class="t" id="t27" style="top:696px;font-size:11.3px;color:#333;left:133.222px;letter-spacing:0.412px;">O:</div><div class="fld" style="left:148.8px;top:686px;width:44.6px;height:30px"></div><div class="vl" style="left:180.6px;top:687px;height:28px;background:#e4e2d8"></div><div class="hl" style="left:181.6px;top:701px;width:10.8px;background:#e4e2d8"></div><div class="t" id="t28" style="top:696px;font-size:11.2px;color:#222;left:158.528px;letter-spacing:-0.531px;">100</div><svg width="767" height="727"><path d="M182.5 696l4.5 -4.6l4.5 4.6z" fill="#2b2b2b"/><path d="M182.5 706.8l4.5 4.6l4.5 -4.6z" fill="#2b2b2b"/></svg><div class="vl" style="left:197px;top:686px;height:30px;background:#d2d2d0"></div><div class="btn" style="left:236px;top:683px;width:88.4px;height:32.6px;background:linear-gradient(#e2e2e0,#d2d2d0);border-color:#a9a9a6"></div><div class="t" id="t29" style="top:696px;font-size:11.8px;color:#3a3a3a;left:251.892px;font-weight:bold;letter-spacing:-0.202px;">Layer 1</div><div class="a" style="left:247px;top:699.6px;width:2.4px;height:2.6px;background:#3a3a3a;border-radius:1px"></div><svg width="767" height="727"><path d="M302.6 699.4h10.4l-5.2 5.2z" fill="#333"/><circle cx="207.900" cy="701.400" r="2.500" fill="#0a0a0a"/><path d="M204.400 704.200q3.600 1.200 7 0" fill="none" stroke="#0a0a0a" stroke-width="1.100"/><path d="M204.600 702.600q1.400-2.400 3.400-2.600" fill="none" stroke="#0a0a0a" stroke-width="1"/><path d="M206 696l1.400 3.600M208.600 695.200l-.2 4M211 697l-1.800 2.800M204.600 698.600l2 1.800" stroke="#0a0a0a" stroke-width="1.100"/><circle cx="207" cy="700.600" r=".7" fill="#eee"/><rect x="222.500" y="700" width="6.600" height="5.400" fill="#fcfcf4" stroke="#222" stroke-width="1"/><path d="M228.600 700.600v4.400h-5.600" fill="none" stroke="#e8c830" stroke-width="1.300"/><path d="M223.400 695.700h3.400q1.800 0 1.800 1.800v2.400" fill="none" stroke="#222" stroke-width="1.200"/><rect x="225" y="701.400" width="1.800" height="2.600" fill="#111"/></svg><div class="t" id="t30" style="top:695px;font-size:13px;color:#2a2a2a;left:329.82px;"><b>Star</b> with 5 vertices in layer <b>Layer 1</b>. Click sele</div><div class="vl" style="left:598px;top:686px;height:30px;background:#c9c9c7"></div><div class="t" id="t31" style="top:687px;font-size:10.5px;color:#333;left:599.67px;letter-spacing:-0.308px;">X:</div><div class="t" id="t32" style="top:703px;font-size:10.5px;color:#333;left:599.67px;letter-spacing:0.077px;">Y:</div><div class="t m" id="t33" style="top:687px;font-size:11.5px;color:#222;left:610.91px;letter-spacing:0.241px;">1142.86</div><div class="t m" id="t34" style="top:703px;font-size:11.5px;color:#222;left:610.91px;letter-spacing:0.241px;">-834.29</div><div class="t" id="t35" style="top:696px;font-size:10.8px;color:#333;left:669.252px;letter-spacing:-0.476px;">Z:</div><div class="fld" style="left:680.8px;top:686px;width:55.4px;height:30px"></div><div class="vl" style="left:721.4px;top:687px;height:28px;background:#e4e2d8"></div><div class="hl" style="left:722.4px;top:701px;width:12.8px;background:#e4e2d8"></div><div class="t" id="t36" style="top:696px;font-size:10.6px;color:#222;left:696.664px;letter-spacing:-0.012px;">35%</div><svg width="767" height="727"><path d="M724.3 696l4.5 -4.6l4.5 4.6z" fill="#2b2b2b"/><path d="M724.3 706.8l4.5 4.6l4.5 -4.6z" fill="#2b2b2b"/></svg>
<!-- dialog -->
<div class="a" style="left:41px;top:131px;width:342px;height:564.600px;background:#9a9a98;border-radius:7px 7px 0 0"></div><div class="a" style="left:42px;top:132px;width:340px;height:562.600px;background:#e8e8e7;border-radius:6px 6px 0 0;box-shadow:inset 0 1px 0 #fbfbfb"></div><div class="hl" style="left:42px;top:168px;width:340px;background:#a4a4a2"></div><div class="t" id="t37" style="top:144px;font-size:13.2px;color:#8c8c8c;left:121.508px;font-weight:bold;letter-spacing:0.095px;">Fill and Stroke (Shift+Ctrl+F)</div><svg width="767" height="727"><path d="M360.300 146.200l7.600 7.600M367.900 146.200l-7.600 7.600" stroke="#8a8e8e" stroke-width="2.100" fill="none"/></svg><div class="t" id="t38" style="top:178px;font-size:13px;color:#2e2e2e;left:60.02px;">Fill and Stroke (Shift+Ctrl+F)</div><svg width="767" height="727"><path d="M44 177.300h13.800v13.400h-13.800z" fill="#fdfdfd" stroke="#0a0a0a" stroke-width="1.900"/><path d="M58.600 177L49 186.600L43 192L43.400 188.400L55.600 176.600z" fill="#111"/><path d="M43 192l7.400-3.200l8-8.800l-1.400-1.600z" fill="#111"/><path d="M46 189.400L55 180" stroke="#bbb" stroke-width=".9"/><path d="M55.800 178l3 3" stroke="#e8c020" stroke-width="3"/><path d="M58.200 181.200l.9.900" stroke="#d42a12" stroke-width="2"/><rect x="333.800" y="178.800" width="9.800" height="9.600" rx="2" fill="#ececea" stroke="#868684" stroke-width="1.300"/><path d="M341 181v5.400l-4.800-2.700z" fill="#868684"/><rect x="361.600" y="178.800" width="9.800" height="9.600" rx="2" fill="#ececea" stroke="#868684" stroke-width="1.300"/><path d="M364 181.200l5 5M369 181.200l-5 5" stroke="#7a7a78" stroke-width="2.100"/></svg><div class="a" style="left:43px;top:198px;width:338px;height:496px;border:1px solid #b0b0ae"></div><div class="a" style="left:96px;top:204.500px;width:103.600px;height:26px;background:#e2e2e0;border:1px solid #b4b4b2;border-bottom:none;border-radius:4px 4px 0 0"></div><div class="a" style="left:198.600px;top:204.500px;width:101.400px;height:26px;background:#e2e2e0;border:1px solid #b4b4b2;border-bottom:none;border-radius:4px 4px 0 0"></div><div class="a" style="left:47.200px;top:229.600px;width:330px;height:378.600px;background:#fefefe;border:1px solid #b0b0ae"></div><div class="a" style="left:47.200px;top:202px;width:49.400px;height:29px;background:#fefefe;border:1px solid #b0b0ae;border-bottom:none;border-radius:4px 4px 0 0"></div><div class="t" id="t39" style="top:211px;font-size:13px;color:#2e2e2e;left:71.62px;letter-spacing:0.043px;">Fill</div><div class="t" id="t40" style="top:212px;font-size:13px;color:#2e2e2e;left:117.52px;letter-spacing:0.407px;">Stroke paint</div><div class="t" id="t41" style="top:212px;font-size:13px;color:#2e2e2e;left:220.22px;letter-spacing:0.299px;">Stroke style</div><svg width="767" height="727"><defs><linearGradient id="gFt" x1="0" y1="0" x2="1" y2="1"><stop offset="0" stop-color="#aab4e0"/><stop offset=".5" stop-color="#cdd5ee"/><stop offset="1" stop-color="#f2f4fb"/></linearGradient><linearGradient id="gLin" x1="0" y1="1" x2="1" y2="0"><stop offset="0" stop-color="#9aa2d2"/><stop offset=".3" stop-color="#aab2dc"/><stop offset=".48" stop-color="#c4cce6"/><stop offset=".62" stop-color="#d8deee"/><stop offset=".85" stop-color="#f4f6fa"/><stop offset="1" stop-color="#ffffff"/></linearGradient><radialGradient id="gRad" cx=".5" cy=".5" r=".62"><stop offset="0" stop-color="#fbfbfe"/><stop offset=".3" stop-color="#e4e8f4"/><stop offset=".7" stop-color="#a8b0da"/><stop offset="1" stop-color="#9098cc"/></radialGradient><pattern id="pChk" x="210.600" y="246.600" width="9.400" height="9.400" patternUnits="userSpaceOnUse"><rect width="9.400" height="9.400" fill="#fdfdfe"/><path d="M4.700 1.4L8 4.700L4.700 8L1.4 4.700zM0 -3.3L3.3 0L0 3.3L-3.3 0zM9.400 -3.3L12.7 0L9.400 3.3L6.1 0zM0 6.1L3.3 9.400L0 12.7L-3.3 9.400zM9.400 6.1L12.7 9.400L9.400 12.7L6.1 9.400z" fill="#a4acd8"/></pattern></defs><rect x="55" y="211" width="12" height="11.600" fill="url(#gFt)"/><rect x="101.500" y="213.500" width="11" height="10.500" fill="#ececea"/><path d="M101.500 224.400V213.500H112.800" fill="none" stroke="#2a2a2a" stroke-width="1"/><path d="M112.500 214V224H101.800" fill="none" stroke="#aaa" stroke-width="1"/><path d="M204 219.200h11.600M204 214.300h8" stroke="#222" stroke-width="1.100"/><path d="M211.200 211.800l4.200 2.500l-4.200 2.500z" fill="#222"/><path d="M204 223.300h12" stroke="#222" stroke-width="1.200" stroke-dasharray="1.400 1.200"/></svg><div class="btn on" style="left:95.400px;top:239px;width:33px;height:33.400px;background:#d4d4d2;border-color:#a8a8a5"></div><div class="btn on" style="left:339.500px;top:239px;width:25px;height:33.400px;background:#d4d4d2;border-color:#a8a8a5"></div><svg width="767" height="727"><path d="M70.800 251.800l9.400 9.400M80.200 251.800l-9.400 9.400" stroke="#111" stroke-width="2.500"/><rect x="102.900" y="246.600" width="19" height="18.800" fill="#a4aad4" stroke="#111" stroke-width="1.300"/><rect x="138.100" y="246.600" width="19.400" height="18.800" fill="url(#gLin)" stroke="#111" stroke-width="1.300"/><rect x="174.400" y="246.600" width="19.400" height="18.800" fill="url(#gRad)" stroke="#111" stroke-width="1.300"/><rect x="210.600" y="246.600" width="18.800" height="18.800" fill="url(#pChk)" stroke="#111" stroke-width="1.300"/><rect x="246.900" y="246.600" width="18.600" height="18.800" fill="#a4aad4" stroke="#111" stroke-width="1.300"/><rect x="249.400" y="249" width="14" height="14.200" fill="#4a3868"/><rect x="249.400" y="249" width="12" height="12.200" fill="#fff"/><path d="M317.79999999999995 251.700C317.79999999999995 249.400 320.29999999999995 248.800 321.9 250C322.7 250.800 323.29999999999995 251.400 323.9 251.400C324.5 251.400 325.09999999999997 250.800 325.9 250C327.5 248.800 330.0 249.400 330.0 251.700C330.29999999999995 257.500 328.29999999999995 262.100 323.9 262.100C319.5 262.100 317.5 257.500 317.79999999999995 251.700ZM323.900 254.300C325.400 254.300 326.500 255.700 326.500 257.500C326.500 259.300 325.400 260.500 323.900 260.500C322.400 260.500 321.300 259.300 321.300 257.500C321.300 255.700 322.400 254.300 323.900 254.300Z" fill="#0a0a0a" fill-rule="evenodd"/><path d="M345.79999999999995 251.700C345.79999999999995 249.400 348.29999999999995 248.800 349.9 250C350.7 250.800 351.29999999999995 251.400 351.9 251.400C352.5 251.400 353.09999999999997 250.800 353.9 250C355.5 248.800 358.0 249.400 358.0 251.700C358.29999999999995 257.500 356.29999999999995 262.100 351.9 262.100C347.5 262.100 345.5 257.500 345.79999999999995 251.700Z" fill="#0a0a0a"/><path d="M287 252C287 246.600 296.400 246.400 296.400 251.600C296.400 255.400 291.500 254.800 291.500 258.400" fill="none" stroke="#0a0a0a" stroke-width="3.900"/><rect x="289" y="259.800" width="4.900" height="3.900" fill="#0a0a0a"/></svg><div class="t" id="t42" style="top:285px;font-size:13.4px;color:#2a2a2a;left:57.796px;font-weight:bold;letter-spacing:0.141px;">Flat color</div><div class="btn" style="left:59px;top:306.200px;width:57.600px;height:28.800px"></div><div class="t" id="t43" style="top:316px;font-size:11.3px;color:#444;left:76.122px;letter-spacing:-0.451px;">RGB</div><div class="btn on" style="left:121.05px;top:306.200px;width:57.600px;height:28.800px"></div><div class="t" id="t44" style="top:316px;font-size:11.3px;color:#444;left:139.672px;letter-spacing:-0.651px;">HSL</div><div class="btn" style="left:183.1px;top:306.200px;width:57.600px;height:28.800px"></div><div class="t" id="t45" style="top:316px;font-size:11.3px;color:#444;left:195.972px;letter-spacing:-0.224px;">CMYK</div><div class="btn" style="left:245.15px;top:306.200px;width:57.600px;height:28.800px"></div><div class="t" id="t46" style="top:316px;font-size:11.3px;color:#444;left:256.772px;letter-spacing:0.517px;">Wheel</div><div class="btn" style="left:307.2px;top:306.200px;width:57.600px;height:28.800px"></div><div class="t" id="t47" style="top:316px;font-size:11.3px;color:#444;left:323.822px;letter-spacing:-0.301px;">CMS</div><div class="a" style="left:87px;top:343px;width:193px;height:35px;background:#000"></div><div class="a" style="left:88px;top:344px;width:16.6px;height:33px;background:#cf3018"></div><div class="a" style="left:104.6px;top:344px;width:31.5px;height:33px;background:#e2c736"></div><div class="a" style="left:136.1px;top:344px;width:32.1px;height:33px;background:#2ee02a"></div><div class="a" style="left:168.2px;top:344px;width:7.6px;height:33px;background:#14f09c"></div><div class="a" style="left:175.8px;top:344px;width:15.9px;height:33px;background:#04e6f0"></div><div class="a" style="left:191.7px;top:344px;width:8.2px;height:33px;background:#0a9cff"></div><div class="a" style="left:199.9px;top:344px;width:32.1px;height:33px;background:#5a24b0"></div><div class="a" style="left:232px;top:344px;width:32px;height:33px;background:#ac46b4"></div><div class="a" style="left:264px;top:344px;width:15px;height:33px;background:#cf3018"></div><div class="a" style="left:87px;top:380px;width:193px;height:35px;background:#000"></div><div class="a" style="left:88px;top:381px;width:35px;height:33px;background:#555555"></div><div class="a" style="left:123px;top:381px;width:11.2px;height:33px;background:#573160"></div><div class="a" style="left:134.2px;top:381px;width:8.8px;height:33px;background:#5f3668"></div><div class="a" style="left:143px;top:381px;width:6px;height:33px;background:#593062"></div><div class="a" style="left:149px;top:381px;width:51.5px;height:33px;background:#622f70"></div><div class="a" style="left:200.5px;top:381px;width:12.9px;height:33px;background:#6a1f7c"></div><div class="a" style="left:213.4px;top:381px;width:64.3px;height:33px;background:#5a24b0"></div><div class="a" style="left:277.7px;top:381px;width:1.3px;height:33px;background:#3c1a7a"></div><div class="a" style="left:87px;top:417px;width:193px;height:35px;background:#000"></div><div class="a" style="left:88px;top:418px;width:10.3px;height:33px;background:#000000"></div><div class="a" style="left:98.3px;top:418px;width:10.5px;height:33px;background:#1a0f1c"></div><div class="a" style="left:108.8px;top:418px;width:14.2px;height:33px;background:#2e1a34"></div><div class="a" style="left:123px;top:418px;width:6.3px;height:33px;background:#3a3a3c"></div><div class="a" style="left:129.3px;top:418px;width:13.7px;height:33px;background:#533162"></div><div class="a" style="left:143px;top:418px;width:3.5px;height:33px;background:#593062"></div><div class="a" style="left:146.5px;top:418px;width:12.1px;height:33px;background:#633072"></div><div class="a" style="left:158.6px;top:418px;width:2.7px;height:33px;background:#8a5c94"></div><div class="a" style="left:161.3px;top:418px;width:7.4px;height:33px;background:#5a24b0"></div><div class="a" style="left:168.7px;top:418px;width:38.1px;height:33px;background:#ac46b4"></div><div class="a" style="left:206.8px;top:418px;width:3px;height:33px;background:#c8a0c4"></div><div class="a" style="left:209.8px;top:418px;width:11.2px;height:33px;background:#a4a8d4"></div><div class="a" style="left:221px;top:418px;width:22.5px;height:33px;background:#d0b0d6"></div><div class="a" style="left:243.5px;top:418px;width:6.3px;height:33px;background:#d4d8ea"></div><div class="a" style="left:249.8px;top:418px;width:10.9px;height:33px;background:#e8d8e8"></div><div class="a" style="left:260.7px;top:418px;width:8.3px;height:33px;background:#f0e8f4"></div><div class="a" style="left:269px;top:418px;width:10px;height:33px;background:#fbfbfb"></div><div class="a" style="left:87px;top:454px;width:193px;height:35px;background:#000"></div><svg width="767" height="727"><defs><clipPath id="cpA"><rect x="88" y="455" width="191" height="33"/></clipPath></defs><g clip-path="url(#cpA)"><rect x="88" y="455" width="8.100" height="8.100" fill="#9c94a0"/><rect x="96" y="455" width="8.100" height="8.100" fill="#64576a"/><rect x="104" y="455" width="8.100" height="8.100" fill="#9c94a0"/><rect x="112" y="455" width="8.100" height="8.100" fill="#64576a"/><rect x="120" y="455" width="8.100" height="8.100" fill="#9c94a0"/><rect x="128" y="455" width="8.100" height="8.100" fill="#64576a"/><rect x="136" y="455" width="8.100" height="8.100" fill="#9c94a0"/><rect x="144" y="455" width="8.100" height="8.100" fill="#6a4c70"/><rect x="152" y="455" width="8.100" height="8.100" fill="#ac46b4"/><rect x="160" y="455" width="8.100" height="8.100" fill="#6a4c70"/><rect x="168" y="455" width="8.100" height="8.100" fill="#ac46b4"/><rect x="176" y="455" width="8.100" height="8.100" fill="#5c486c"/><rect x="184" y="455" width="8.100" height="8.100" fill="#5a24b0"/><rect x="192" y="455" width="8.100" height="8.100" fill="#5e4868"/><rect x="200" y="455" width="8.100" height="8.100" fill="#6e4d7a"/><rect x="208" y="455" width="8.100" height="8.100" fill="#5e4468"/><rect x="216" y="455" width="8.100" height="8.100" fill="#6b4976"/><rect x="224" y="455" width="8.100" height="8.100" fill="#5d4167"/><rect x="232" y="455" width="8.100" height="8.100" fill="#674472"/><rect x="240" y="455" width="8.100" height="8.100" fill="#5d3e67"/><rect x="248" y="455" width="8.100" height="8.100" fill="#64406e"/><rect x="256" y="455" width="8.100" height="8.100" fill="#5c3a66"/><rect x="264" y="455" width="8.100" height="8.100" fill="#603b6b"/><rect x="272" y="455" width="8.100" height="8.100" fill="#5c3766"/><rect x="88" y="463" width="8.100" height="8.100" fill="#64576a"/><rect x="96" y="463" width="8.100" height="8.100" fill="#9c94a0"/><rect x="104" y="463" width="8.100" height="8.100" fill="#64576a"/><rect x="112" y="463" width="8.100" height="8.100" fill="#9c94a0"/><rect x="120" y="463" width="8.100" height="8.100" fill="#64576a"/><rect x="128" y="463" width="8.100" height="8.100" fill="#9c94a0"/><rect x="136" y="463" width="8.100" height="8.100" fill="#64576a"/><rect x="144" y="463" width="8.100" height="8.100" fill="#ac46b4"/><rect x="152" y="463" width="8.100" height="8.100" fill="#6a4c70"/><rect x="160" y="463" width="8.100" height="8.100" fill="#ac46b4"/><rect x="168" y="463" width="8.100" height="8.100" fill="#6a4c70"/><rect x="176" y="463" width="8.100" height="8.100" fill="#5a24b0"/><rect x="184" y="463" width="8.100" height="8.100" fill="#5c486c"/><rect x="192" y="463" width="8.100" height="8.100" fill="#70507c"/><rect x="200" y="463" width="8.100" height="8.100" fill="#5e4668"/><rect x="208" y="463" width="8.100" height="8.100" fill="#6c4b78"/><rect x="216" y="463" width="8.100" height="8.100" fill="#5d4367"/><rect x="224" y="463" width="8.100" height="8.100" fill="#694774"/><rect x="232" y="463" width="8.100" height="8.100" fill="#5d3f67"/><rect x="240" y="463" width="8.100" height="8.100" fill="#664270"/><rect x="248" y="463" width="8.100" height="8.100" fill="#5d3c67"/><rect x="256" y="463" width="8.100" height="8.100" fill="#623d6d"/><rect x="264" y="463" width="8.100" height="8.100" fill="#5c3866"/><rect x="272" y="463" width="8.100" height="8.100" fill="#5f3969"/><rect x="88" y="471" width="8.100" height="8.100" fill="#9c94a0"/><rect x="96" y="471" width="8.100" height="8.100" fill="#64576a"/><rect x="104" y="471" width="8.100" height="8.100" fill="#9c94a0"/><rect x="112" y="471" width="8.100" height="8.100" fill="#64576a"/><rect x="120" y="471" width="8.100" height="8.100" fill="#9c94a0"/><rect x="128" y="471" width="8.100" height="8.100" fill="#64576a"/><rect x="136" y="471" width="8.100" height="8.100" fill="#9c94a0"/><rect x="144" y="471" width="8.100" height="8.100" fill="#6a4c70"/><rect x="152" y="471" width="8.100" height="8.100" fill="#ac46b4"/><rect x="160" y="471" width="8.100" height="8.100" fill="#6a4c70"/><rect x="168" y="471" width="8.100" height="8.100" fill="#ac46b4"/><rect x="176" y="471" width="8.100" height="8.100" fill="#5c486c"/><rect x="184" y="471" width="8.100" height="8.100" fill="#5a24b0"/><rect x="192" y="471" width="8.100" height="8.100" fill="#5e4868"/><rect x="200" y="471" width="8.100" height="8.100" fill="#6e4d7a"/><rect x="208" y="471" width="8.100" height="8.100" fill="#5e4468"/><rect x="216" y="471" width="8.100" height="8.100" fill="#6b4976"/><rect x="224" y="471" width="8.100" height="8.100" fill="#5d4167"/><rect x="232" y="471" width="8.100" height="8.100" fill="#674472"/><rect x="240" y="471" width="8.100" height="8.100" fill="#5d3e67"/><rect x="248" y="471" width="8.100" height="8.100" fill="#64406e"/><rect x="256" y="471" width="8.100" height="8.100" fill="#5c3a66"/><rect x="264" y="471" width="8.100" height="8.100" fill="#603b6b"/><rect x="272" y="471" width="8.100" height="8.100" fill="#5c3766"/><rect x="88" y="479" width="8.100" height="8.100" fill="#64576a"/><rect x="96" y="479" width="8.100" height="8.100" fill="#9c94a0"/><rect x="104" y="479" width="8.100" height="8.100" fill="#64576a"/><rect x="112" y="479" width="8.100" height="8.100" fill="#9c94a0"/><rect x="120" y="479" width="8.100" height="8.100" fill="#64576a"/><rect x="128" y="479" width="8.100" height="8.100" fill="#9c94a0"/><rect x="136" y="479" width="8.100" height="8.100" fill="#64576a"/><rect x="144" y="479" width="8.100" height="8.100" fill="#ac46b4"/><rect x="152" y="479" width="8.100" height="8.100" fill="#6a4c70"/><rect x="160" y="479" width="8.100" height="8.100" fill="#ac46b4"/><rect x="168" y="479" width="8.100" height="8.100" fill="#6a4c70"/><rect x="176" y="479" width="8.100" height="8.100" fill="#5a24b0"/><rect x="184" y="479" width="8.100" height="8.100" fill="#5c486c"/><rect x="192" y="479" width="8.100" height="8.100" fill="#70507c"/><rect x="200" y="479" width="8.100" height="8.100" fill="#5e4668"/><rect x="208" y="479" width="8.100" height="8.100" fill="#6c4b78"/><rect x="216" y="479" width="8.100" height="8.100" fill="#5d4367"/><rect x="224" y="479" width="8.100" height="8.100" fill="#694774"/><rect x="232" y="479" width="8.100" height="8.100" fill="#5d3f67"/><rect x="240" y="479" width="8.100" height="8.100" fill="#664270"/><rect x="248" y="479" width="8.100" height="8.100" fill="#5d3c67"/><rect x="256" y="479" width="8.100" height="8.100" fill="#623d6d"/><rect x="264" y="479" width="8.100" height="8.100" fill="#5c3866"/><rect x="272" y="479" width="8.100" height="8.100" fill="#5f3969"/><rect x="88" y="487" width="8.100" height="8.100" fill="#9c94a0"/><rect x="96" y="487" width="8.100" height="8.100" fill="#64576a"/><rect x="104" y="487" width="8.100" height="8.100" fill="#9c94a0"/><rect x="112" y="487" width="8.100" height="8.100" fill="#64576a"/><rect x="120" y="487" width="8.100" height="8.100" fill="#9c94a0"/><rect x="128" y="487" width="8.100" height="8.100" fill="#64576a"/><rect x="136" y="487" width="8.100" height="8.100" fill="#9c94a0"/><rect x="144" y="487" width="8.100" height="8.100" fill="#6a4c70"/><rect x="152" y="487" width="8.100" height="8.100" fill="#ac46b4"/><rect x="160" y="487" width="8.100" height="8.100" fill="#6a4c70"/><rect x="168" y="487" width="8.100" height="8.100" fill="#ac46b4"/><rect x="176" y="487" width="8.100" height="8.100" fill="#5c486c"/><rect x="184" y="487" width="8.100" height="8.100" fill="#5a24b0"/><rect x="192" y="487" width="8.100" height="8.100" fill="#5e4868"/><rect x="200" y="487" width="8.100" height="8.100" fill="#6e4d7a"/><rect x="208" y="487" width="8.100" height="8.100" fill="#5e4468"/><rect x="216" y="487" width="8.100" height="8.100" fill="#6b4976"/><rect x="224" y="487" width="8.100" height="8.100" fill="#5d4167"/><rect x="232" y="487" width="8.100" height="8.100" fill="#674472"/><rect x="240" y="487" width="8.100" height="8.100" fill="#5d3e67"/><rect x="248" y="487" width="8.100" height="8.100" fill="#64406e"/><rect x="256" y="487" width="8.100" height="8.100" fill="#5c3a66"/><rect x="264" y="487" width="8.100" height="8.100" fill="#603b6b"/><rect x="272" y="487" width="8.100" height="8.100" fill="#5c3766"/></g><path d="M235.3 344h7l-3.500 3.600z" fill="#000" stroke="#fff" stroke-width=".7"/><path d="M235.3 377h7l-3.500 -3.600z" fill="#000" stroke="#fff" stroke-width=".7"/><path d="M144.1 381h7l-3.500 3.600z" fill="#000" stroke="#fff" stroke-width=".7"/><path d="M144.1 414h7l-3.500 -3.600z" fill="#000" stroke="#fff" stroke-width=".7"/><path d="M141.4 418h7l-3.500 3.600z" fill="#000" stroke="#fff" stroke-width=".7"/><path d="M141.4 451h7l-3.500 -3.600z" fill="#000" stroke="#fff" stroke-width=".7"/><path d="M274.5 455h7l-3.500 3.600z" fill="#000" stroke="#fff" stroke-width=".7"/><path d="M274.5 488h7l-3.500 -3.600z" fill="#000" stroke="#fff" stroke-width=".7"/></svg><div class="t" id="t48" style="top:355px;font-size:12.3px;color:#333;right:687.662px;">H:</div><div class="fld" style="left:289.3px;top:344.2px;width:67.4px;height:32.2px"></div><div class="vl" style="left:340.2px;top:345.2px;height:30.2px;background:#e4e2d8"></div><div class="hl" style="left:341.2px;top:360.3px;width:14.5px;background:#e4e2d8"></div><div class="t" id="t49" style="top:355px;font-size:12.5px;color:#222;left:298.25px;letter-spacing:0.616px;">204</div><svg width="767" height="727"><path d="M343.95 354.2l4.5 -4.6l4.5 4.6z" fill="#2b2b2b"/><path d="M343.95 367.2l4.5 4.6l4.5 -4.6z" fill="#2b2b2b"/></svg><div class="t" id="t50" style="top:392px;font-size:12.3px;color:#333;right:687.662px;">S:</div><div class="fld" style="left:289.3px;top:381.3px;width:67.4px;height:32.2px"></div><div class="vl" style="left:340.2px;top:382.3px;height:30.2px;background:#e4e2d8"></div><div class="hl" style="left:341.2px;top:397.4px;width:14.5px;background:#e4e2d8"></div><div class="t" id="t51" style="top:392px;font-size:12.5px;color:#222;left:298.25px;letter-spacing:0.129px;">81</div><svg width="767" height="727"><path d="M343.95 391.3l4.5 -4.6l4.5 4.6z" fill="#2b2b2b"/><path d="M343.95 404.3l4.5 4.6l4.5 -4.6z" fill="#2b2b2b"/></svg><div class="t" id="t52" style="top:429px;font-size:12.3px;color:#333;right:687.662px;">L:</div><div class="fld" style="left:289.3px;top:418.4px;width:67.4px;height:32.2px"></div><div class="vl" style="left:340.2px;top:419.4px;height:30.2px;background:#e4e2d8"></div><div class="hl" style="left:341.2px;top:434.5px;width:14.5px;background:#e4e2d8"></div><div class="t" id="t53" style="top:429px;font-size:12.5px;color:#222;left:298.25px;letter-spacing:0.263px;">78</div><svg width="767" height="727"><path d="M343.95 428.4l4.5 -4.6l4.5 4.6z" fill="#2b2b2b"/><path d="M343.95 441.4l4.5 4.6l4.5 -4.6z" fill="#2b2b2b"/></svg><div class="t" id="t54" style="top:466px;font-size:12.3px;color:#333;right:687.662px;">A:</div><div class="fld" style="left:289.3px;top:455.5px;width:67.4px;height:32.2px"></div><div class="vl" style="left:340.2px;top:456.5px;height:30.2px;background:#e4e2d8"></div><div class="hl" style="left:341.2px;top:471.6px;width:14.5px;background:#e4e2d8"></div><div class="t" id="t55" style="top:466px;font-size:12.5px;color:#222;left:298.25px;letter-spacing:0.616px;">255</div><svg width="767" height="727"><path d="M343.95 465.5l4.5 -4.6l4.5 4.6z" fill="#9a9a9a"/><path d="M343.95 478.5l4.5 4.6l4.5 -4.6z" fill="#2b2b2b"/></svg><div class="a" style="left:60px;top:569.400px;width:18px;height:33px;background:#efefef"></div><div class="a" style="left:82px;top:569.400px;width:18px;height:33px;background:#efefef"></div><svg width="767" height="727"><defs><linearGradient id="gGam" x1="0" y1="0" x2="1" y2="1"><stop offset="0" stop-color="#38d838"/><stop offset=".5" stop-color="#c8c860"/><stop offset="1" stop-color="#d83a3a"/></linearGradient><pattern id="pDots" width="2" height="2" patternUnits="userSpaceOnUse"><rect width="1" height="1" fill="#888"/><rect x="1" y="1" width="1" height="1" fill="#888"/></pattern></defs><rect x="61" y="577.600" width="16.400" height="16.400" fill="url(#pDots)"/><path d="M63.600 578.400L77 590.600L64.600 594z" fill="url(#gGam)" stroke="#555" stroke-width=".6"/><path d="M64.600 594l4-6l8.400 2.600z" fill="#5a48c8" opacity=".75"/><circle cx="90.900" cy="585.800" r="6.300" fill="none" stroke="#cc4c3a" stroke-width="5"/><circle cx="90.900" cy="585.800" r="6.300" fill="none" stroke="#8a3a30" stroke-width="5" stroke-dasharray="1 1" opacity=".35"/><circle cx="90.900" cy="585.800" r="3.600" fill="#fdfdfd" stroke="#6a3028" stroke-width=".7"/><circle cx="90.900" cy="585.800" r="8.900" fill="none" stroke="#6a3028" stroke-width=".7"/><path d="M116 594.600l1.200-3.200l8-8l2.200 2.200l-8 8z" fill="#c8ccd8" stroke="#333" stroke-width=".9"/><path d="M124 581.800l1.800-1.800q1.800-1.800 3.600 0q1.800 1.800 0 3.600l-1.800 1.800l1 1l-1.400 1.400l-5.600-5.600l1.400-1.400z" fill="#222"/><path d="M115.200 595.400l1.600-2.400" stroke="#5a24b0" stroke-width="1.600"/></svg><div class="t" id="t56" style="top:581px;font-size:11.3px;color:#3a3a3a;left:261.822px;letter-spacing:-0.667px;">RGBA:</div><div class="fld" style="left:297px;top:571px;width:67.800px;height:30px"></div><div class="t" id="t57" style="top:580px;font-size:11.6px;color:#222;left:306.704px;letter-spacing:-0.039px;">5c3566ff</div><div class="a" style="left:350px;top:612px;width:27px;height:35.800px;background:#fbfbfb"></div><div class="a" style="left:350px;top:652px;width:27px;height:36px;background:#fbfbfb"></div><div class="a" style="left:48.200px;top:612.600px;width:311.200px;height:34.400px;background:#fcfcfc;border:1px solid #b0b0ae;border-top-color:#8e8e8c;border-right:none;border-radius:5px 0 0 5px"></div><div class="a" style="left:48.200px;top:653px;width:311.200px;height:34.200px;background:#fcfcfc;border:1px solid #b0b0ae;border-top-color:#8e8e8c;border-right:none;border-radius:5px 0 0 5px"></div><div class="a" style="left:51px;top:656px;width:303.800px;height:28px;background:#4a90d9"></div><div class="t" id="t58" style="top:624px;font-size:13px;color:#222;left:54.52px;letter-spacing:0.054px;">Blur (%)</div><div class="t" id="t59" style="top:624px;font-size:12px;color:#222;right:418.38px;">0.0</div><div class="t" id="t60" style="top:664px;font-size:13px;color:#eef2fa;left:54.52px;letter-spacing:0.119px;">Opacity (%)</div><div class="t" id="t61" style="top:664px;font-size:12px;color:#e4ecf8;right:418.38px;">100.0</div><svg width="767" height="727"><path d="M363 624l4.700 -4.200l4.700 4.200z" fill="#2b2b2b"/><path d="M363 637.200l4.700 4.200l4.700 -4.200z" fill="#9a9a9a"/><path d="M363 664l4.700 -4.200l4.700 4.200z" fill="#9a9a9a"/><path d="M363 677l4.700 4.200l4.700 -4.200z" fill="#2b2b2b"/></svg>
</body></html>
